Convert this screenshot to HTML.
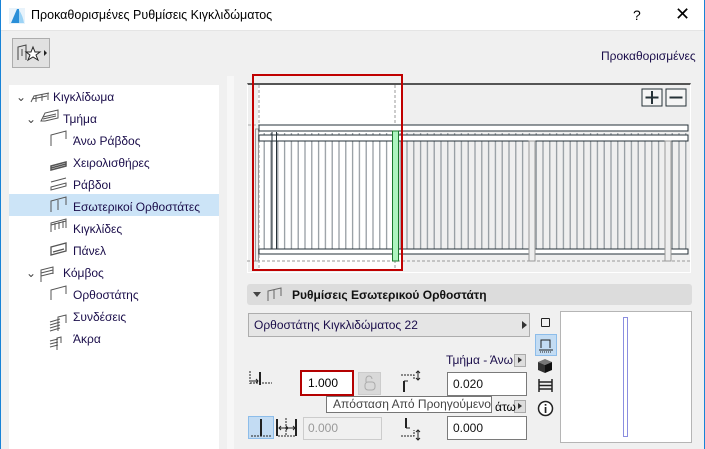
<!DOCTYPE html>
<html><head><meta charset="utf-8"><style>
*{margin:0;padding:0;box-sizing:border-box}
body{width:705px;height:449px;overflow:hidden;background:#f0f0f0;font-family:"Liberation Sans","DejaVu Sans",sans-serif;font-size:12px;color:#000;position:relative}
.a{position:absolute}
.tree div{position:absolute;left:0;height:22px;line-height:22px;color:#1a0d4a;white-space:nowrap}
.in{position:absolute;background:#fff;border:1px solid #7a7a7a;height:24px;line-height:22px;padding-left:5px;font-size:12px}
</style></head><body>
<div class="a" style="left:0;top:0;width:705px;height:31px;background:#fff;border-bottom:1px solid #e5e5e5"></div>
<div class="a" style="left:0;top:0;width:1px;height:449px;background:#1883d7"></div>
<div class="a" style="left:704px;top:0;width:1px;height:449px;background:#1883d7"></div>
<svg class="a" style="left:9px;top:8px" width="16" height="16"><rect width="16" height="16" fill="#e8f3fb"/><path d="M2 15 L8 1 L10 1 L10 15 Z" fill="#2a8fd8"/><path d="M10 2 Q14 8 15 15 L10 15Z" fill="#9cd3f5"/></svg>
<div class="a" style="left:31px;top:8px;font-size:12.5px">Προκαθορισμένες Ρυθμίσεις Κιγκλιδώματος</div>
<div class="a" style="left:633px;top:7px;font-size:14px">?</div>
<div class="a" style="left:675px;top:4px;font-size:18px;font-weight:300">✕</div>
<div class="a" style="left:12px;top:38px;width:38px;height:30px;border:1px solid #adadad;background:#e1e1e1"></div>
<svg class="a" style="left:16px;top:42px" width="32" height="22"><path d="M2 18 V5 L10 3 V18 M6 7 V14" stroke="#444" fill="none"/><path d="M17 5 l2 5 5 0 -4 3 2 5 -5 -3 -5 3 2 -5 -4 -3 5 0z" fill="#fff" stroke="#222"/><path d="M28 8 l3 3 -3 3z" fill="#222"/></svg>
<div class="a" style="left:601px;top:49px;color:#1a0d4a">Προκαθορισμένες</div>
<div class="a" style="left:9px;top:85px;width:210px;height:364px;background:#fff"></div>
<div class="a" style="left:227px;top:76px;width:7px;height:373px;background:#f7f7f7"></div>
<div class="a" style="left:9px;top:194px;width:210px;height:22px;background:#cce4f7"></div>
<div class="tree a" style="left:0;top:86px;width:220px">
<div style="left:16px;top:0"><span style="color:#444">⌄</span></div>
<div style="left:53px;top:0">Κιγκλίδωμα</div>
<div style="left:26px;top:22px;color:#444">⌄</div>
<div style="left:63px;top:22px">Τμήμα</div>
<div style="left:73px;top:44px">Άνω Ράβδος</div>
<div style="left:73px;top:66px">Χειρολισθήρες</div>
<div style="left:73px;top:88px">Ράβδοι</div>
<div style="left:73px;top:110px">Εσωτερικοί Ορθοστάτες</div>
<div style="left:73px;top:132px">Κιγκλίδες</div>
<div style="left:73px;top:154px">Πάνελ</div>
<div style="left:26px;top:176px;color:#444">⌄</div>
<div style="left:63px;top:176px">Κόμβος</div>
<div style="left:73px;top:198px">Ορθοστάτης</div>
<div style="left:73px;top:220px">Συνδέσεις</div>
<div style="left:73px;top:242px">Άκρα</div>
</div>
<svg class="a" style="left:0;top:86px" width="70" height="264" fill="none" stroke="#555">
<path d="M31 16 l3-6 15-3 M32 13 l15-3 M36 16 v-6 M42 15 v-7 M48 14 v-7"/>
<path d="M41 35 l4-8 13-3 v8 l-13 3 z M43 31 l13-3 M43 33 l13-3"/>
<path d="M51 60 v-11 l15-4 v8"/>
<path d="M51 80 l15-4 v4 l-15 4z M51 82 l15-4" stroke-width="1.5"/>
<path d="M51 101 l15-4 v3 l-15 4z M51 96 l15-4"/>
<path d="M51 126 v-11 l15-4 v8 M58 124 v-10"/>
<path d="M51 146 v-9 l15-4 v9 M51 139 l15-4 M55 144 v-7 M59 143 v-7 M63 142 v-7"/>
<path d="M51 169 v-8 l15-4 v8z M53 166 l11-3" stroke-width="1.3"/>
<path d="M41 196 v-12 l12-3 v7 M41 187 l12-3 M41 190 l12-3" />
<path d="M51 214 v-10 l15-4 v8"/>
<path d="M50 236 l10-3 M50 239 l10-3 M50 242 l10-3 M50 245 l10-3 M58 245 v-14 l8-2 v8"/>
<path d="M50 258 l8-2 M50 261 l8-2 M50 255 l8-2 M57 264 v-12 l4-1 v6"/>
</svg>
<!-- preview -->
<div class="a" style="left:247px;top:83px;width:444px;height:190px;background:#efefef;border:1px solid #fff;border-top:2px solid #555"></div>
<div class="a" style="left:258px;top:85px;width:143px;height:185px;background:#fff"></div>
<svg class="a" style="left:247px;top:83px" width="445" height="190">
<defs><pattern id="b" x="0" y="0" width="6.8" height="200" patternUnits="userSpaceOnUse"><rect x="3" y="0" width="1.2" height="200" fill="#8f969c"/></pattern></defs>
<rect x="12" y="50" width="430" height="116" fill="url(#b)"/>
<path d="M1 42 H12" stroke="#aaa" stroke-dasharray="3 2"/>
<path d="M12 2 V188 M148 2 V188" stroke="#999" stroke-dasharray="3 2" fill="none"/>
<path d="M0 178 H445" stroke="#999" stroke-dasharray="3 2"/>
<rect x="8.5" y="46" width="3" height="132" fill="#eee" stroke="#999"/>
<rect x="12" y="42" width="429" height="6" fill="#fff" stroke="#263238"/>
<rect x="12" y="52" width="429" height="6" fill="#fff" stroke="#263238"/>
<rect x="12" y="166" width="429" height="5" fill="#fff" stroke="#263238"/>
<path d="M25 49 V166 M29.5 49 V166" stroke="#263238"/>
<rect x="145.5" y="48" width="6" height="130" fill="#aef5c0" stroke="#1b7a2e"/>
<rect x="282" y="58" width="6" height="120" fill="#eee" stroke="#999"/>
<rect x="418" y="58" width="6" height="120" fill="#eee" stroke="#999"/>
<rect x="395" y="6" width="20" height="17" fill="#f5f5f5" stroke="#263238"/>
<rect x="419" y="6" width="20" height="17" fill="#f5f5f5" stroke="#263238"/>
<path d="M398.5 14.5 h13 M405 8 v13 M422.5 14.5 h13" stroke="#263238" stroke-width="2"/>
</svg>
<div class="a" style="left:252px;top:74px;width:151px;height:197px;border:2px solid #c00000"></div>
<!-- section header -->
<div class="a" style="left:247px;top:284px;width:445px;height:21px;background:#dcdcdc;border-radius:3px"></div>
<div class="a" style="left:253px;top:292px;width:0;height:0;border-left:4px solid transparent;border-right:4px solid transparent;border-top:5px solid #444"></div>
<svg class="a" style="left:266px;top:286px" width="18" height="16" fill="none" stroke="#666"><path d="M2 15 V5 L15 2 V10 M8 13 V4"/></svg>
<div class="a" style="left:292px;top:288px;font-weight:bold;color:#111">Ρυθμίσεις Εσωτερικού Ορθοστάτη</div>
<div class="a" style="left:248px;top:313px;width:282px;height:24px;background:#e5e5e5;border:1px solid #adadad;line-height:22px;padding-left:5px;color:#1a0d4a">Ορθοστάτης Κιγκλιδώματος 22</div>
<div class="a" style="left:522px;top:321px;border-top:4px solid transparent;border-bottom:4px solid transparent;border-left:5px solid #333"></div>
<div class="a" style="left:541px;top:318px;width:9px;height:9px;border:1.5px solid #222;border-radius:1px"></div>
<div class="a" style="left:535px;top:334px;width:22px;height:22px;background:#c3dcf3;border:1px solid #8dbdea"></div>
<svg class="a" style="left:536px;top:335px" width="20" height="20" fill="none" stroke="#222"><path d="M5 13 V5 H14 V13 M3 15 H17"/><path d="M4 17 h12" stroke-dasharray="1 1"/></svg>
<svg class="a" style="left:537px;top:358px" width="16" height="16"><path d="M8 1 L15 4 L8 7 L1 4Z" fill="#777"/><path d="M1 4 L8 7 V15 L1 12Z" fill="#333"/><path d="M15 4 L8 7 V15 L15 12Z" fill="#111"/></svg>
<svg class="a" style="left:537px;top:378px" width="17" height="15" fill="none" stroke="#222" stroke-width="1.5"><path d="M2 1 V14 M15 1 V14 M2 4 H15 M2 7.5 H15 M2 11 H15"/></svg>
<svg class="a" style="left:537px;top:400px" width="17" height="17"><circle cx="8.5" cy="8.5" r="7" fill="#fff" stroke="#222" stroke-width="1.5"/><rect x="7.7" y="7" width="1.7" height="6" fill="#222"/><rect x="7.7" y="4" width="1.7" height="1.7" fill="#222"/></svg>
<div class="a" style="left:560px;top:311px;width:132px;height:132px;background:#fff;border:1px solid #b5b5b5"></div>
<div class="a" style="left:623px;top:317px;width:5px;height:120px;border:1px solid #8b8ee0"></div>
<div class="a" style="left:446px;top:353px;color:#1a0d4a">Τμήμα - Άνω</div>
<div class="a" style="left:514px;top:354px;width:12px;height:13px;background:#ddd;border:1px solid #aaa"></div>
<div class="a" style="left:518px;top:357px;border-top:3.5px solid transparent;border-bottom:3.5px solid transparent;border-left:4px solid #333"></div>
<div class="a" style="left:514px;top:400px;width:12px;height:13px;background:#ddd;border:1px solid #aaa"></div>
<div class="a" style="left:518px;top:403px;border-top:3.5px solid transparent;border-bottom:3.5px solid transparent;border-left:4px solid #333"></div>
<div class="a" style="left:495px;top:400px">άτω</div>
<svg class="a" style="left:248px;top:370px" width="24" height="20" fill="none" stroke="#222"><path d="M2 1 V14 M2 13 H24" stroke-dasharray="2 1"/><path d="M12 2 V15" stroke-width="2"/><path d="M3 11 H10 M8 9 l2 2 -2 2"/></svg>
<div class="a" style="left:300px;top:370px;width:54px;height:26px;background:#fff;border:2px solid #b40000;line-height:22px;padding-left:6px">1.000</div>
<div class="a" style="left:358px;top:372px;width:23px;height:23px;background:#d9d9d9;border:1px solid #ccc"></div>
<svg class="a" style="left:362px;top:375px" width="16" height="16" fill="none" stroke="#aaa"><path d="M4 7 V4 a3 3 0 0 1 6 0"/><rect x="3" y="7" width="10" height="8" rx="3"/></svg>
<svg class="a" style="left:400px;top:370px" width="24" height="24" fill="none" stroke="#222"><path d="M1 5 H14 V10" stroke-dasharray="2 1"/><path d="M4 11 V22" stroke-width="2"/><path d="M4 11 H8"/><path d="M18 1 V10 M16 3 l2-2 2 2 M16 8 l2 2 2-2"/></svg>
<div class="in" style="left:447px;top:372px;width:80px;color:#111">0.020</div>
<div class="a" style="left:248px;top:416px;width:26px;height:23px;background:#c3dcf3;border:1px solid #8dbdea"></div>
<svg class="a" style="left:248px;top:416px" width="52" height="26" fill="none" stroke="#222"><path d="M13 3 V20" stroke-width="2"/><path d="M3 20 H24" stroke-dasharray="2 1"/><path d="M29 3 V20 M48 3 V20" stroke-width="2"/><path d="M38 2 V20 M30 20 H48" stroke-dasharray="2 1"/><path d="M31 12 H47 M33 10 l-2 2 2 2 M45 10 l2 2 -2 2 M38 10 l2 2 -2 2"/></svg>
<div class="a" style="left:303px;top:417px;width:79px;height:23px;background:#f0f0f0;border:1px solid #ccc;line-height:21px;padding-left:4px;color:#999">0.000</div>
<svg class="a" style="left:400px;top:416px" width="24" height="26" fill="none" stroke="#222"><path d="M6 2 V12" stroke-width="2"/><path d="M6 12 H10"/><path d="M1 20 H14 V14" stroke-dasharray="2 1"/><path d="M18 14 V24 M16 16 l2-2 2 2 M16 22 l2 2 2-2"/></svg>
<div class="in" style="left:447px;top:416px;width:80px;color:#111">0.000</div>
<div class="a" style="left:326px;top:396px;width:166px;height:17px;background:#fff;border:1px solid #767676;line-height:15px;padding-left:6px;color:#444;font-size:12px">Απόσταση Από Προηγούμενο</div>
</body></html>
